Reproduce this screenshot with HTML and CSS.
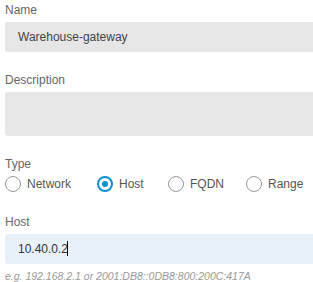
FILE: index.html
```html
<!DOCTYPE html>
<html lang="en">
<head>
    <meta charset="UTF-8">
    <meta name="viewport" content="width=device-width, initial-scale=1.0">
    <title>Network Object</title>
    <link rel="stylesheet" href="styles.css">
</head>
<body>
    <div class="form">
        <div class="form-group">
            <label class="field-label">Name</label>
            <div class="field field-disabled">Warehouse-gateway</div>
        </div>

        <div class="form-group">
            <label class="field-label">Description</label>
            <div class="field field-disabled field-area"></div>
        </div>

        <div class="form-group type-group">
            <label class="field-label">Type</label>
            <div class="radio-row">
                <div class="radio-option"><span class="radio"></span>Network</div>
                <div class="radio-option"><span class="radio checked"></span>Host</div>
                <div class="radio-option"><span class="radio"></span>FQDN</div>
                <div class="radio-option"><span class="radio"></span>Range</div>
            </div>
        </div>

        <div class="form-group host-group">
            <label class="field-label">Host</label>
            <div class="field field-active">10.40.0.2<span class="caret"></span></div>
            <div class="hint">e.g. 192.168.2.1 or 2001:DB8::0DB8:800:200C:417A</div>
        </div>
    </div>
</body>
</html>
```

FILE: styles.css
```css
html {
    overflow: hidden;
}
body {
    margin: 0;
    padding: 3px 0 0 5px;
    font-family: 'Liberation Sans', Arial, sans-serif;
    font-size: 12px;
    color: #333;
    background-color: white;
}
.form {
    width: 320px;
}
.form-group {
    margin-bottom: 21px;
}
.field-label {
    display: block;
    color: #666;
    line-height: 14px;
    margin-bottom: 5px;
}
.field {
    height: 30px;
    line-height: 30px;
    padding-left: 13px;
    border-radius: 3px;
    box-sizing: border-box;
}
.field-disabled {
    background-color: #e6e6e6;
    color: #444;
}
.field-area {
    height: 44px;
}
.field-active {
    background-color: #e8f1f9;
    color: #333;
}
.caret {
    display: inline-block;
    width: 1px;
    height: 15px;
    background-color: #111;
    vertical-align: -3px;
    margin-left: -1px;
}
.type-group {
    margin-bottom: 23px;
}
.radio-row {
    display: flex;
    align-items: center;
    height: 16px;
    margin-top: 1px;
}
.radio-option {
    display: flex;
    align-items: center;
    color: #555;
    font-size: 12px;
}
.radio-option:nth-child(1) { width: 92px; }
.radio-option:nth-child(2) { width: 71px; }
.radio-option:nth-child(3) { width: 78px; }
.radio {
    width: 16px;
    height: 16px;
    border: 1.5px solid #999;
    border-radius: 50%;
    box-sizing: border-box;
    margin-right: 6px;
    position: relative;
}
.radio.checked {
    border: 2px solid #0d8fd4;
}
.radio.checked::after {
    content: '';
    position: absolute;
    left: 3px;
    top: 3px;
    width: 6px;
    height: 6px;
    border-radius: 50%;
    background-color: #0d8fd4;
}
.hint {
    margin-top: 6px;
    font-size: 10.5px;
    line-height: 12px;
    font-style: italic;
    color: #999;
}
```
